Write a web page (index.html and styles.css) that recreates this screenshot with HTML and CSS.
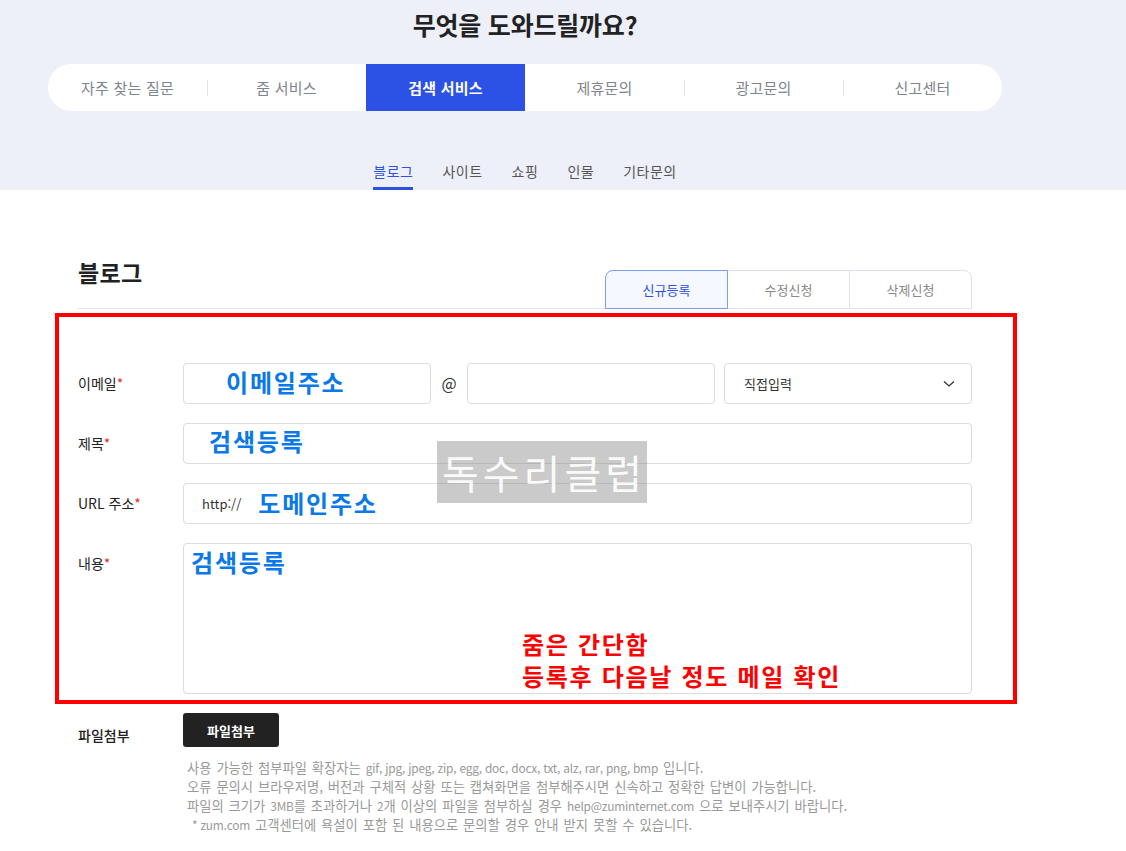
FILE: index.html
```html
<!DOCTYPE html>
<html lang="ko">
<head>
  <meta charset="UTF-8">
  <meta name="viewport" content="width=device-width, initial-scale=1.0">
  <title>고객센터 - 검색 서비스</title>
  <link rel="stylesheet" href="styles.css">
</head>
<body>
  <div class="top">
    <div class="wrap">
      <h1 class="title">무엇을 도와드릴까요?</h1>
      <ul class="nav">
        <li>자주 찾는 질문</li>
        <li>줌 서비스</li>
        <li class="on">검색 서비스</li>
        <li class="after-on">제휴문의</li>
        <li>광고문의</li>
        <li>신고센터</li>
      </ul>
      <ul class="subnav">
        <li class="on">블로그</li>
        <li>사이트</li>
        <li>쇼핑</li>
        <li>인물</li>
        <li>기타문의</li>
      </ul>
    </div>
  </div>

  <div class="wrap">
    <div class="content">
      <div class="head">
        <h2>블로그</h2>
        <ul class="tabs">
          <li class="on">신규등록</li>
          <li>수정신청</li>
          <li>삭제신청</li>
        </ul>
      </div>

      <div class="form">
        <div class="row">
          <div class="label">이메일<em>*</em></div>
          <div class="email">
            <div class="field email-id"><span class="mark">이메일주소</span></div>
            <span class="at">@</span>
            <div class="field email-domain"></div>
            <div class="field select">
              <span>직접입력</span>
              <svg width="12" height="8" viewBox="0 0 12 8"><polyline points="1,1.5 6,6 11,1.5" fill="none" stroke="#333" stroke-width="1.3"/></svg>
            </div>
          </div>
        </div>
        <div class="row">
          <div class="label">제목<em>*</em></div>
          <div class="field subject"><span class="mark">검색등록</span></div>
        </div>
        <div class="row">
          <div class="label">URL 주소<em>*</em></div>
          <div class="field url"><span class="proto">http://</span><span class="mark">도메인주소</span></div>
        </div>
        <div class="row last">
          <div class="label">내용<em>*</em></div>
          <div class="field area">
            <div class="mark">검색등록</div>
            <div class="note-red">줌은 간단함<br>등록후 다음날 정도 메일 확인</div>
          </div>
        </div>
        <div class="watermark">독수리클럽</div>
      </div>

      <div class="file-row">
        <div class="label">파일첨부</div>
        <div class="file-body">
          <button class="btn-file" type="button">파일첨부</button>
          <p class="help">
            사용 가능한 첨부파일 확장자는 <span class="en">gif, jpg, jpeg, zip, egg, doc, docx, txt, alz, rar, png, bmp</span> 입니다.<br>
            오류 문의시 브라우저명, 버전과 구체적 상황 또는 캡쳐화면을 첨부해주시면 신속하고 정확한 답변이 가능합니다.<br>
            파일의 크기가 <span class="en">3MB</span>를 초과하거나 <span class="en">2</span>개 이상의 파일을 첨부하실 경우 <span class="en">help@zuminternet.com</span> 으로 보내주시기 바랍니다.<br>
            &nbsp;<span class="en">* zum.com</span> 고객센터에 욕설이 포함 된 내용으로 문의할 경우 안내 받지 못할 수 있습니다.
          </p>
        </div>
      </div>
    </div>
  </div>
</body>
</html>
```

FILE: styles.css
```css
*{
  margin: 0;
  padding: 0;
  box-sizing: border-box;
}
body{
  font-family: "Noto Sans CJK KR", "Noto Sans", sans-serif;
  color: #333;
  background: #fff;
}
ul{
  list-style: none;
}
.wrap{
  width: 954px;
  margin-left: 48px;
}

/* 상단 */
.top{
  background-color: #eef0f9;
  height: 190px;
  padding-top: 8px;
}
.title{
  text-align: center;
  font-size: 25px;
  line-height: 32px;
  font-weight: 700;
  color: #222;
  letter-spacing: -0.2px;
}
.nav{
  display: flex;
  margin-top: 24px;
  height: 47px;
  background: #fff;
  border-radius: 24px;
  overflow: hidden;
}
.nav li{
  flex: 1;
  position: relative;
  text-align: center;
  line-height: 47px;
  font-size: 15px;
  color: #80848e;
  letter-spacing: 0.2px;
}
.nav li + li::before{
  content: "";
  position: absolute;
  left: 0;
  top: 16px;
  width: 1px;
  height: 16px;
  background: #e2e4ea;
}
.nav li.on{
  background: #2b52e4;
  color: #fff;
  font-weight: 700;
}
.nav li.on::before, .nav li.after-on::before{
  display: none;
}
.subnav{
  display: flex;
  justify-content: center;
  gap: 29px;
  margin-top: 41px;
}
.subnav li{
  font-size: 14px;
  line-height: 20px;
  padding: 9px 0 6px;
  border-bottom: 3px solid transparent;
  color: #555;
  letter-spacing: 0.5px;
}
.subnav li.on{
  color: #2b52e4;
  border-bottom-color: #2b52e4;
}

/* 본문 */
.content{
  padding: 0 30px;
}
.head{
  display: flex;
  justify-content: space-between;
  align-items: flex-start;
  margin-top: 67px;
  border-bottom: 1px solid #e4e6ee;
}
.head h2{
  font-size: 23px;
  line-height: 30px;
  font-weight: 700;
  color: #222;
  letter-spacing: 0.3px;
}
.tabs{
  display: flex;
  margin-top: 13px;
  margin-bottom: -1px;
}
.tabs li{
  width: 123px;
  height: 39px;
  line-height: 37px;
  text-align: center;
  font-size: 13px;
  color: #888;
  border: 1px solid #dfe2ea;
  margin-left: -1px;
}
.tabs li:first-child{
  border-top-left-radius: 8px;
}
.tabs li:last-child{
  border-top-right-radius: 8px;
}
.tabs li.on{
  position: relative;
  color: #2b52e4;
  background: #f6f8ff;
  border-color: #7f9cf2;
}

.form{
  position: relative;
  margin: 4px -45px 0 -23px;
  border: 4px solid #ff0000;
  padding: 46px 41px 6px 19px;
}
.row{
  display: flex;
  align-items: flex-start;
  margin-bottom: 19px;
}
.row.last{
  margin-bottom: 0;
}
.label{
  width: 105px;
  flex-shrink: 0;
  font-size: 14px;
  line-height: 41px;
  color: #222;
}
.label em{
  font-style: normal;
  color: #e52a2a;
}
.field{
  flex: 1;
  height: 41px;
  border: 1px solid #dcdcdc;
  border-radius: 4px;
  display: flex;
  align-items: center;
  background: #fff;
}
.email{
  flex: 1;
  display: flex;
}
.email .field{
  flex: none;
  width: 248px;
}
.at{
  width: 36px;
  text-align: center;
  line-height: 41px;
  font-size: 16px;
  color: #333;
}
.email .select{
  margin-left: 9px;
  justify-content: space-between;
  padding: 0 16px 0 19px;
  font-size: 13px;
  color: #333;
}
.mark{
  font-size: 24px;
  font-weight: 700;
  color: #0a78e8;
  line-height: 30px;
  letter-spacing: 1.8px;
}
.email-id{
  padding-left: 42px;
}
.email-id .mark{
  margin-top: -4px;
}
.subject{
  padding-left: 25px;
}
.subject .mark{
  margin-top: -6px;
}
.url{
  padding-left: 18px;
}
.proto{
  font-size: 13px;
  color: #333;
  margin-right: 17px;
}
.url .mark{
  margin-top: -2px;
}
.area{
  height: 151px;
  display: block;
  padding: 3px 7px;
}
.note-red{
  margin: 51px 0 0 331px;
  font-size: 24px;
  font-weight: 700;
  line-height: 32px;
  color: #ff0000;
  letter-spacing: 1.7px;
}
.watermark{
  position: absolute;
  left: 378px;
  top: 124px;
  width: 210px;
  height: 62px;
  background: rgba(140, 140, 140, 0.46);
  color: rgba(255, 255, 255, 0.92);
  font-size: 40px;
  line-height: 62px;
  text-align: center;
  letter-spacing: 4px;
  text-indent: 4px;
}

.file-row{
  display: flex;
  margin-top: 9px;
}
.file-row .label{
  line-height: 20px;
  padding-top: 12px;
  font-weight: 500;
}
.btn-file{
  width: 96px;
  height: 34px;
  border: 0;
  border-radius: 3px;
  background: #222;
  color: #fff;
  font-family: inherit;
  font-size: 13px;
  font-weight: 700;
}
.help{
  margin: 11px 0 0 4px;
  font-size: 13.3px;
  line-height: 19px;
  color: #999;
  word-spacing: 1.2px;
}
.help .en{
  font-size: 11.9px;
  line-height: 1;
  word-spacing: 0;
  letter-spacing: -0.2px;
}
```
